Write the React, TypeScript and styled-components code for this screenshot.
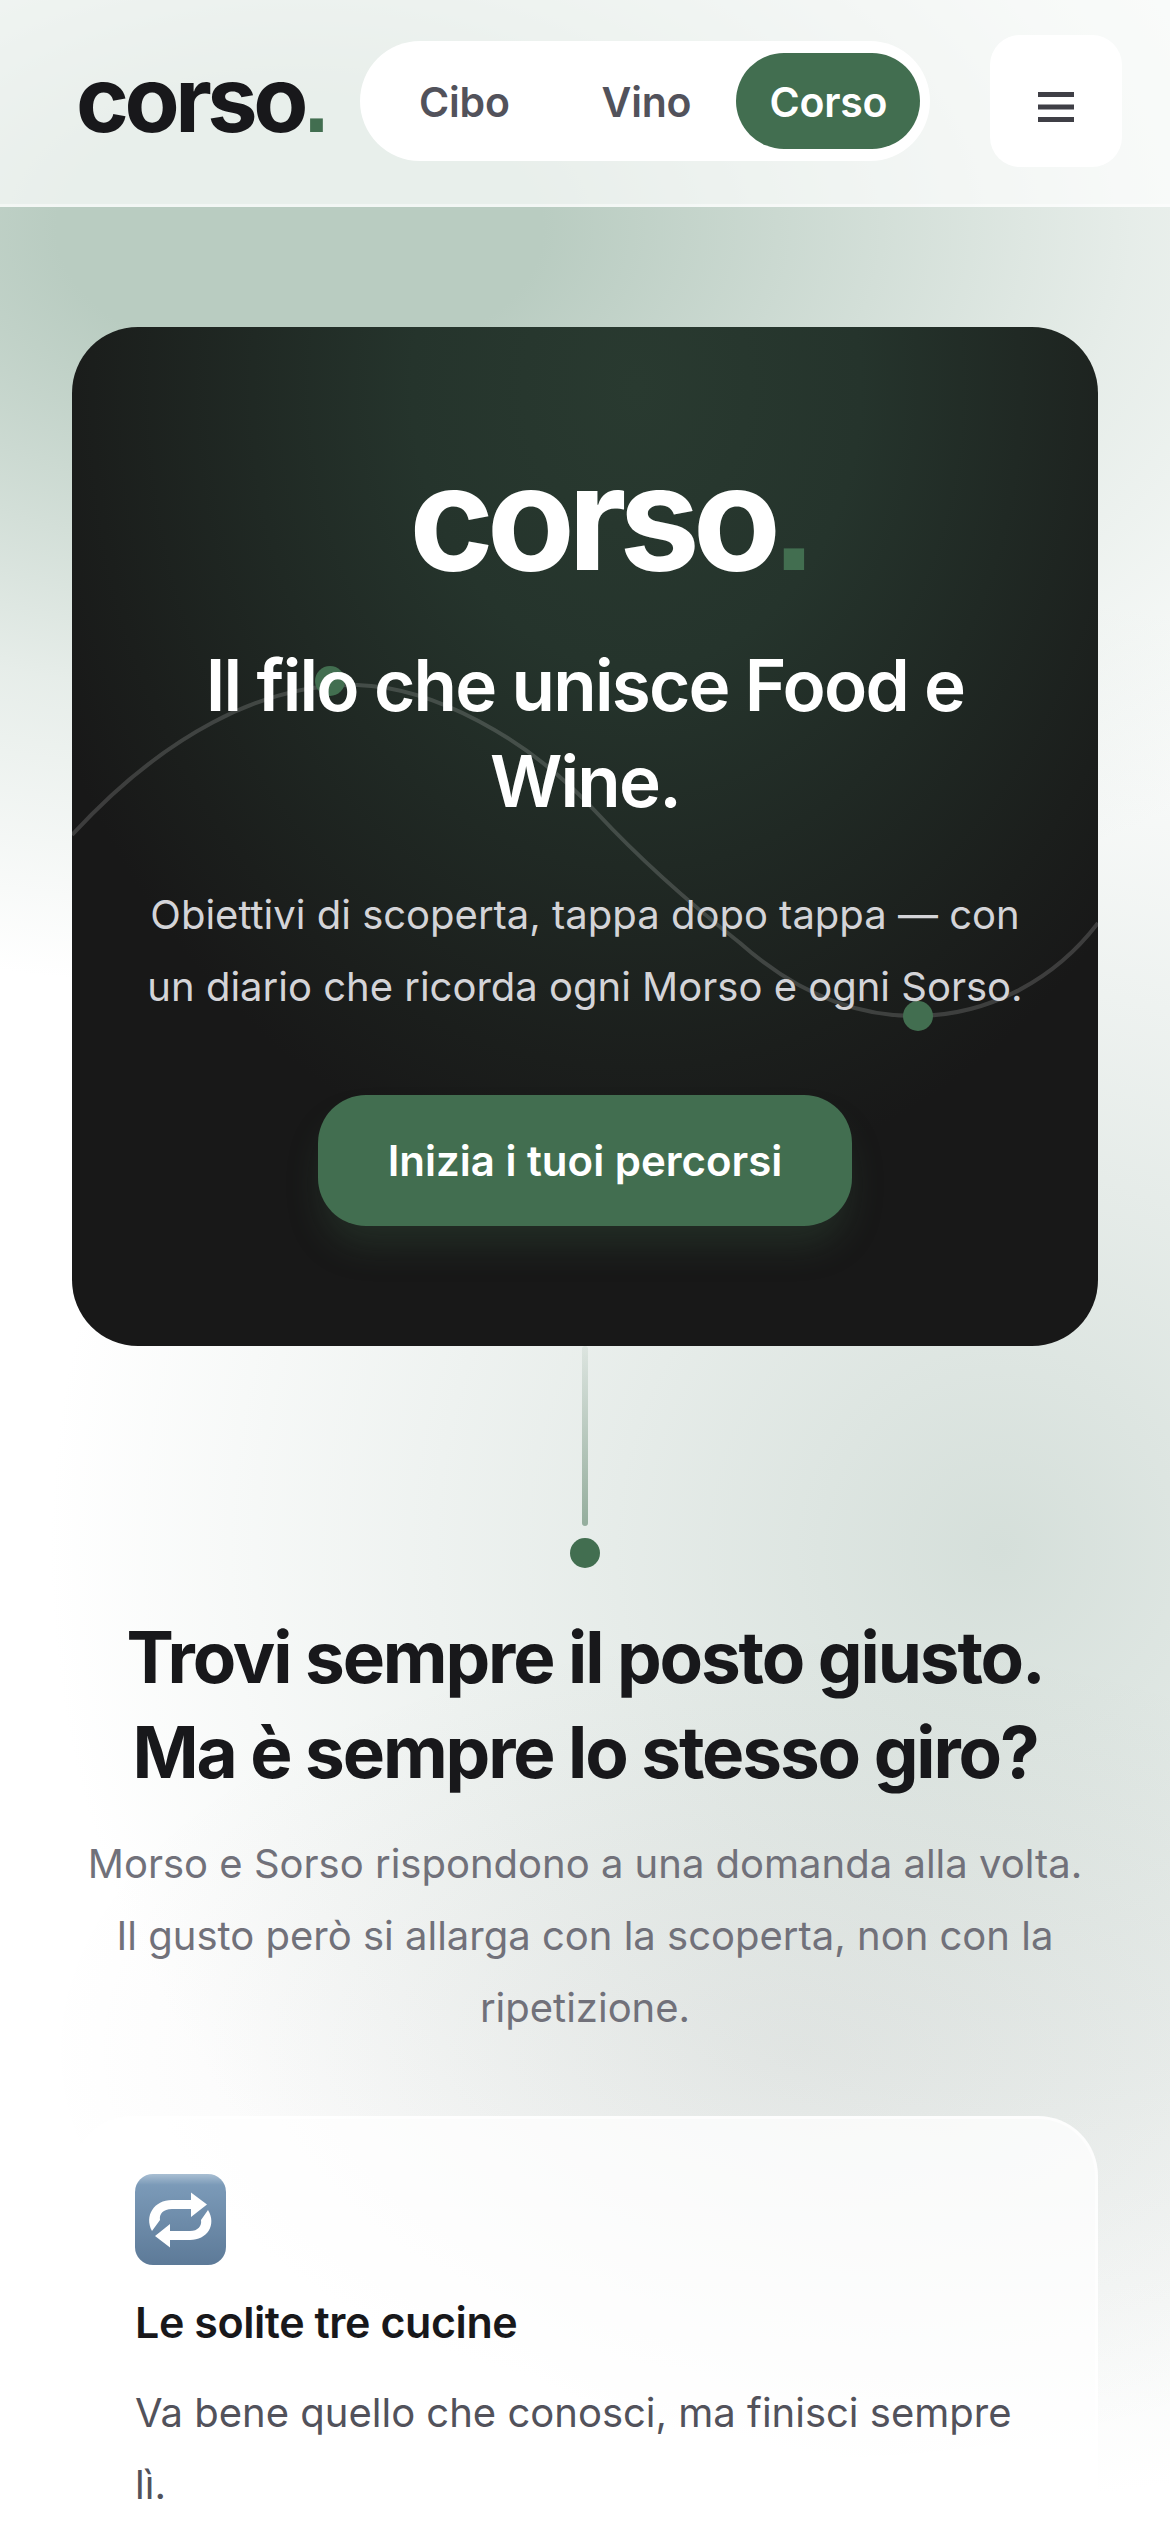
import React from "react";
import styled, { createGlobalStyle } from "styled-components";

const green = "#426e50";
const ink = "#18181b";

const GlobalStyle = createGlobalStyle`
  html, body { margin: 0; padding: 0; background: #fff; }
  * { box-sizing: border-box; }
  body { font-family: "Inter", "Liberation Sans", sans-serif; }
`;

const Page = styled.div`
  width: 1170px;
  height: 2532px;
  overflow: hidden;
  background:
    radial-gradient(ellipse 760px 420px at 800px 2050px, rgba(60, 60, 60, 0.07) 0%, rgba(60, 60, 60, 0) 100%),
    radial-gradient(ellipse 1350px 760px at 300px 230px, #b9ccc1 0%, #b9ccc1 18%, rgba(185, 204, 193, 0.35) 62%, rgba(185, 204, 193, 0) 100%),
    radial-gradient(circle 950px at 1000px 1550px, #d5dfda 0%, rgba(213, 223, 218, 0) 100%),
    #fff;
`;

const Header = styled.header`
  height: 207px;
  display: flex;
  align-items: center;
  padding: 0 48px 3px 76px;
  background: rgba(255, 255, 255, 0.68);
  border-bottom: 3px solid rgba(255, 255, 255, 0.45);
`;

const Logo = styled.span<{ $size: number; $light?: boolean }>`
  font-size: ${(p) => p.$size}px;
  font-weight: 700;
  letter-spacing: -0.05em;
  line-height: 1;
  color: ${(p) => (p.$light ? "#fff" : ink)};

  & > i {
    font-family: "Liberation Sans", sans-serif;
    font-style: normal;
    color: ${green};
  }
`;

const HeroLogo = styled(Logo)`
  margin-left: 46px;
`;

const Nav = styled.nav`
  margin-left: 36px;
  width: 570px;
  height: 120px;
  padding: 12px 10px 12px 12px;
  border-radius: 60px;
  background: #fff;
  display: flex;
  align-items: center;
  justify-content: space-between;
`;

const NavItem = styled.span<{ $active?: boolean; $w: number }>`
  width: ${(p) => p.$w}px;
  height: 96px;
  padding-top: 2px;
  border-radius: 48px;
  display: flex;
  align-items: center;
  justify-content: center;
  font-size: 41px;
  font-weight: 600;
  letter-spacing: -0.005em;
  color: ${(p) => (p.$active ? "#fff" : "#52525b")};
  background: ${(p) => (p.$active ? green : "transparent")};
`;

const MenuButton = styled.button`
  margin-left: auto;
  width: 132px;
  height: 132px;
  border: 0;
  border-radius: 30px;
  background: #fff;
  display: flex;
  align-items: center;
  justify-content: center;
  padding: 12px 0 0;
`;

const Main = styled.main`
  padding: 120px 72px 0;
  display: flex;
  flex-direction: column;
  align-items: center;
`;

const Hero = styled.section`
  position: relative;
  width: 1026px;
  height: 1019px;
  border-radius: 66px;
  overflow: hidden;
  background: radial-gradient(ellipse 640px 800px at 55% 60px, #293a30 0%, #25342c 35%, #1b1e1c 85%, #181818 100%);
  display: flex;
  flex-direction: column;
  align-items: center;
  padding-top: 119px;
  color: #fff;
  text-align: center;
`;

const Wave = styled.svg`
  position: absolute;
  left: 0;
  top: 0;
`;

const HeroBody = styled.div`
  position: relative;
  display: flex;
  flex-direction: column;
  align-items: center;
`;

const HeroTitle = styled.h1`
  margin: 44px 0 0;
  width: 860px;
  font-size: 71px;
  font-weight: 600;
  line-height: 96px;
  letter-spacing: -0.025em;
`;

const HeroText = styled.p`
  margin: 50px 0 0;
  width: 900px;
  font-size: 40px;
  line-height: 72px;
  color: #d4d4d8;
`;

const Cta = styled.button`
  margin-top: 72px;
  width: 534px;
  height: 131px;
  border: 0;
  border-radius: 48px;
  background: ${green};
  color: #fff;
  font-family: inherit;
  font-size: 42px;
  font-weight: 600;
  box-shadow: 0 24px 36px -6px rgba(66, 110, 80, 0.25);
`;

const Thread = styled.div`
  width: 6px;
  height: 180px;
  border-radius: 3px;
  background: linear-gradient(to bottom, rgba(66, 110, 80, 0.08), rgba(66, 110, 80, 0.5));
`;

const ThreadDot = styled.div`
  margin-top: 12px;
  width: 30px;
  height: 30px;
  border-radius: 50%;
  background: ${green};
`;

const Title = styled.h2`
  margin: 42px 0 0;
  width: 1026px;
  font-size: 71px;
  font-weight: 700;
  line-height: 95px;
  letter-spacing: -0.03em;
  text-align: center;
  color: ${ink};
`;

const Lead = styled.p`
  margin: 28px 0 0;
  width: 1026px;
  font-size: 40px;
  line-height: 72px;
  text-align: center;
  color: #71717a;
`;

const Card = styled.article`
  margin-top: 72px;
  width: 1026px;
  padding: 55px 60px 60px 60px;
  border-radius: 60px;
  border: 3px solid rgba(255, 255, 255, 0.6);
  background: rgba(255, 255, 255, 0.75);
`;

const CardIcon = styled.svg`
  display: block;
`;

const CardTitle = styled.h3`
  margin: 27px 0 0;
  font-size: 43px;
  font-weight: 600;
  line-height: 60px;
  letter-spacing: -0.01em;
  color: ${ink};
`;

const CardText = styled.p`
  margin: 25px 0 0;
  font-size: 40px;
  line-height: 72px;
  color: #52525b;
`;

export default function App(): JSX.Element {
  return (
    <>
      <GlobalStyle />
      <Page>
        <Header>
          <Logo $size={90}>
            corso<i>.</i>
          </Logo>
          <Nav>
            <NavItem $w={184}>Cibo</NavItem>
            <NavItem $w={180}>Vino</NavItem>
            <NavItem $w={184} $active>
              Corso
            </NavItem>
          </Nav>
          <MenuButton aria-label="Menu">
            <svg width="36" height="30" viewBox="0 0 36 30">
              <rect y="0" width="36" height="5" fill="#3f3f46" />
              <rect y="12.5" width="36" height="5" fill="#3f3f46" />
              <rect y="25" width="36" height="5" fill="#3f3f46" />
            </svg>
          </MenuButton>
        </Header>
        <Main>
          <Hero>
            <Wave width="1026" height="1019" viewBox="0 0 1026 1019">
              <path
                d="M0 508 C90 410 190 356 285 358 C360 360 455 410 525 486 C565 529 620 578 668 616 C720 662 780 690 846 689 C920 688 985 650 1026 596"
                fill="none"
                stroke="rgba(255,255,255,0.16)"
                strokeWidth="4"
              />
              <circle cx="258" cy="354" r="15" fill={green} />
              <circle cx="846" cy="689" r="15" fill={green} />
            </Wave>
            <HeroBody>
              <HeroLogo $size={144} $light>
                corso<i>.</i>
              </HeroLogo>
              <HeroTitle>Il filo che unisce Food e Wine.</HeroTitle>
              <HeroText>
                Obiettivi di scoperta, tappa dopo tappa — con un diario che ricorda ogni Morso e ogni Sorso.
              </HeroText>
              <Cta>Inizia i tuoi percorsi</Cta>
            </HeroBody>
          </Hero>
          <Thread />
          <ThreadDot />
          <Title>
            Trovi sempre il posto giusto.
            <br />
            Ma è sempre lo stesso giro?
          </Title>
          <Lead>
            Morso e Sorso rispondono a una domanda alla volta.
            <br />
            Il gusto però si allarga con la scoperta, non con la ripetizione.
          </Lead>
          <Card>
            <CardIcon width="91" height="91" viewBox="0 0 91 91">
              <defs>
                <linearGradient id="repeatBg" x1="0" y1="0" x2="0" y2="1">
                  <stop offset="0" stopColor="#a9bfd3" />
                  <stop offset="0.12" stopColor="#7b9ab8" />
                  <stop offset="1" stopColor="#5d7a98" />
                </linearGradient>
              </defs>
              <rect width="91" height="91" rx="18" fill="url(#repeatBg)" />
              <path
                d="M56 18.6 L72 30.5 L56 43 V35 H37 C28 35 24 40 25 46 L17 57 C9 42 19 26 37 26 H56 Z"
                fill="#fff"
              />
              <path
                d="M35 73.5 L20 62 L35 50 V57 H55 C63 57 67 52 66 46 L73 36 C82 51 72 66 55 66 H35 Z"
                fill="#fff"
              />
            </CardIcon>
            <CardTitle>Le solite tre cucine</CardTitle>
            <CardText>Va bene quello che conosci, ma finisci sempre lì.</CardText>
          </Card>
        </Main>
      </Page>
    </>
  );
}
